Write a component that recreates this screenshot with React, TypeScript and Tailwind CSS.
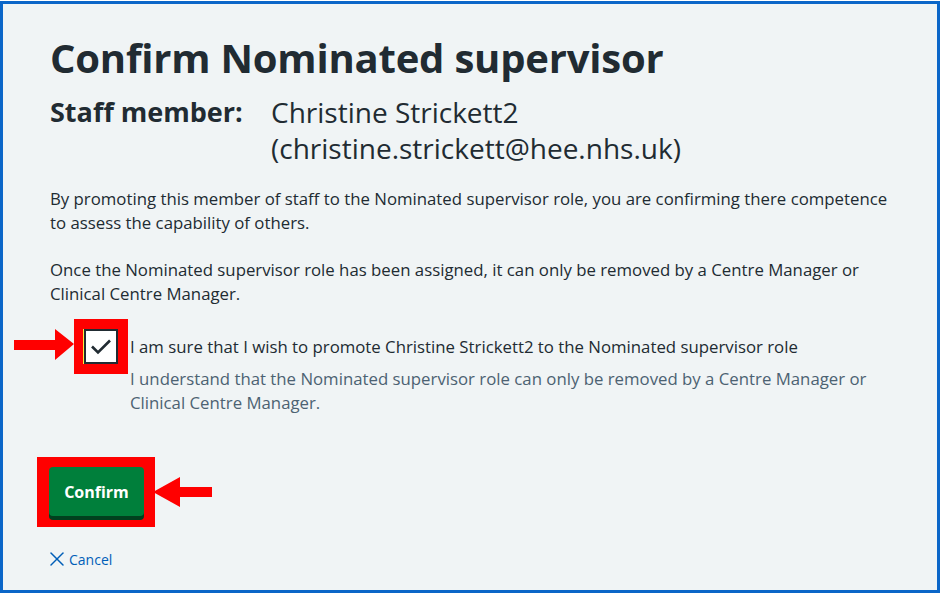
import { X } from 'lucide-react';

function ArrowRight() {
  return (
    <svg width="62" height="32" viewBox="0 0 62 32" className="absolute left-[-60px] top-[10px]">
      <polygon points="0,11 41,11 41,0 60,15 41,31 41,21 0,21" fill="#ff0000" />
    </svg>
  );
}

function ArrowLeft() {
  return (
    <svg width="60" height="32" viewBox="0 0 60 32" className="absolute right-[-58px] top-[20px]">
      <polygon points="0,15 27,0 27,10 59,10 59,20 27,20 27,30" fill="#ff0000" />
    </svg>
  );
}

export default function App() {
  return (
    <div className="w-[943px] h-[594px] bg-white pt-px" style={{ fontFamily: '"Open Sans", "Noto Sans", sans-serif' }}>
      <div className="w-[940px] h-[592px] border-[3px] border-[#0b66c8] bg-[#f0f4f5] pl-[47px] pr-[20px] pt-[30px] text-[#212b32]">
        <h1 className="text-[40px] leading-[48px] font-bold tracking-[-0.2px]">Confirm Nominated supervisor</h1>

        <div className="mt-[12px] flex text-[28px] leading-[36px]">
          <div className="w-[221px] text-[27px] font-bold">Staff member:</div>
          <div>
            <div>Christine Strickett2</div>
            <div>(christine.strickett@hee.nhs.uk)</div>
          </div>
        </div>

        <p className="mt-[21px] max-w-[848px] text-[16.8px] leading-[24px]">
          By promoting this member of staff to the Nominated supervisor role, you are confirming there competence to assess the capability of others.
        </p>
        <p className="mt-[23px] max-w-[848px] text-[16.8px] leading-[24px]">
          Once the Nominated supervisor role has been assigned, it can only be removed by a Centre Manager or Clinical Centre Manager.
        </p>

        <div className="mt-[13px] ml-[24px] flex items-start">
          <div className="relative bg-[#ff0000] p-[10px]">
            <ArrowRight />
            <div className="w-[34px] h-[35px] border-2 border-[#212b32] bg-white flex items-center justify-center shadow-[-1px_0_0_#ffeb3b]">
              <svg width="22" height="18" viewBox="0 0 22 18">
                <path d="M2 8.5 L8 14.5 L20 2.5" fill="none" stroke="#212b32" strokeWidth="2.6" />
              </svg>
            </div>
          </div>
          <div className="ml-[2px] pt-[16px] text-[16.8px] leading-[24px]">
            <div>I am sure that I wish to promote Christine Strickett2 to the Nominated supervisor role</div>
            <div className="mt-[8px] text-[#4c6272]">
              I understand that the Nominated supervisor role can only be removed by a Centre Manager or
              <br />
              Clinical Centre Manager.
            </div>
          </div>
        </div>

        <div className="mt-[42px] ml-[-13px] flex">
          <div className="relative bg-[#ff0000] pl-[12px] pt-[10px] pr-[11px] pb-[11px]">
            <ArrowLeft />
            <button className="w-[95px] h-[49px] rounded-[4px] bg-[#007f3b] text-white text-[16px] font-bold shadow-[0_4px_0_#00401e]">
              Confirm
            </button>
          </div>
        </div>

        <a href="#" className="mt-[20px] ml-[-5px] flex items-center text-[14px] text-[#005eb8]">
          <X size={24} strokeWidth={1.5} />
          <span>Cancel</span>
        </a>
      </div>
    </div>
  );
}
